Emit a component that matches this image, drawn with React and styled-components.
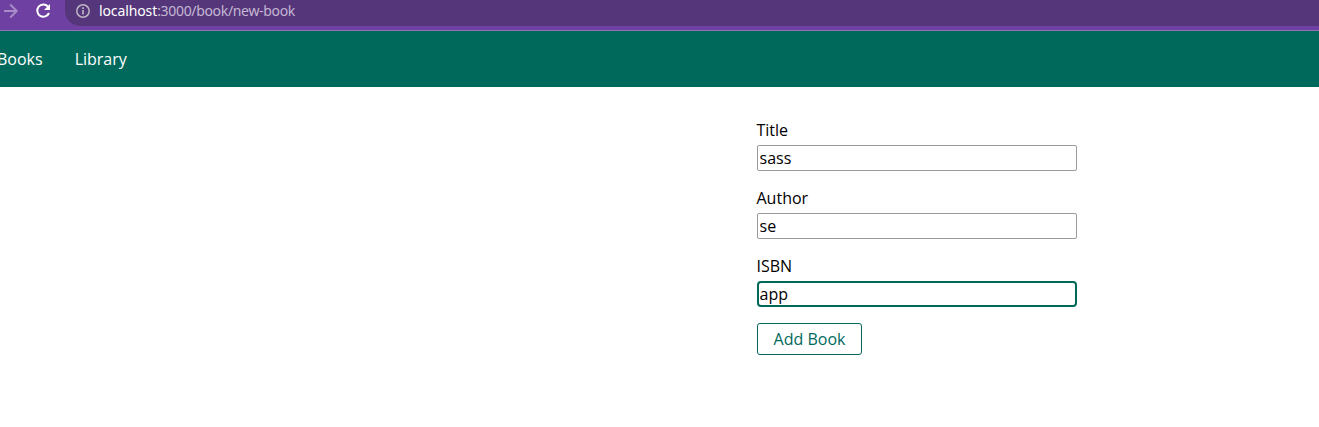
import React from "react";
import styled, { createGlobalStyle } from "styled-components";

const Global = createGlobalStyle`
  * { box-sizing: border-box; }
  body { margin: 0; background: #fff; font: 16px/24px "Open Sans", sans-serif; color: #000; overflow: hidden; }
`;
const BrowserBar = styled.div`
  height: 31px; background: #6e40a1; border-bottom: 1px solid #9271b6;
  display: flex; align-items: flex-start;
`;
const ToolIcon = styled.svg`
  flex: none; width: 22px; height: 22px; margin-left: ${p => p.$gap || 0}px;
  fill: none; stroke: ${p => p.$color}; stroke-width: 2;
`;
const AddressBar = styled.div`
  flex: 1; height: 26px; margin-left: 11px; padding-left: 11px; background: #55367a;
  border-radius: 0 0 0 15px; display: flex; align-items: flex-start;
  font: 14px/22px "Noto Sans", sans-serif; color: #c4b6d4;
`;
const InfoIcon = styled.svg`width: 14px; height: 14px; margin: 4px 9px 0 0; fill: none; stroke: #bdb6c4;`;
const Url = styled.span`letter-spacing: -0.33px;`;
const Host = styled.span`color: #fff; letter-spacing: -0.11px;`;
const Nav = styled.nav`
  height: 56px; background: #00695c; display: flex; align-items: center; gap: 32px;
`;
const NavLink = styled.a`color: #fff; margin-left: ${p => p.$shift || 0}px;`;
const Form = styled.form`width: 320px; margin: 31px 0 0 756.5px; display: flex; flex-direction: column; align-items: flex-start;`;
const Field = styled.label`display: block; width: 100%; margin-bottom: 15px;`;
const Label = styled.span`display: block; height: 24px; margin-bottom: 3px;`;
const Input = styled.input`
  display: block; width: 320px; height: 26px; padding: ${p => p.$active ? "0 1px" : "1px 2px"}; font: 16px/22px "Open Sans", sans-serif; color: #000;
  border: ${p => p.$active ? "2px solid #00695c" : "1px solid #9a9a9a"}; border-radius: ${p => p.$active ? 4 : 2}px; outline: none;
`;
const Button = styled.button`
  height: 32px; width: 105px; margin-top: 1px; padding: 0 0 0 1px; border: 1px solid #00695c; border-radius: 3px; background: #fff;
  color: #00695c; font: 16px/24px "Open Sans", sans-serif;
`;

export default function App() {
  return (
    <>
      <Global />
      <BrowserBar>
        <ToolIcon viewBox="0 0 22 22" $color="#a78cc7"><path d="M4 11h13M10.2 4.5l6.5 6.5-6.5 6.5" /></ToolIcon>
        <ToolIcon viewBox="0 0 22 22" $color="#fff" $gap={10}><path d="M15.9 6.5A6.1 6.1 0 1 0 17 13" /><path d="M18 4v6h-6z" fill="#fff" stroke="none" /></ToolIcon>
        <AddressBar>
          <InfoIcon viewBox="0 0 14 14"><circle cx="7" cy="7" r="6.2" strokeWidth="1.5" /><path d="M7 6v4.5M7 3.3V5" strokeWidth="1.7" /></InfoIcon>
          <Url><Host>localhost</Host>:3000/book/new-book</Url>
        </AddressBar>
      </BrowserBar>
      <Nav><NavLink $shift={-3}>Books</NavLink><NavLink>Library</NavLink></Nav>
      <Form>
        <Field><Label>Title</Label><Input defaultValue="sass" /></Field>
        <Field><Label>Author</Label><Input defaultValue="se" /></Field>
        <Field><Label>ISBN</Label><Input $active defaultValue="app" /></Field>
        <Button type="button">Add Book</Button>
      </Form>
    </>
  );
}
